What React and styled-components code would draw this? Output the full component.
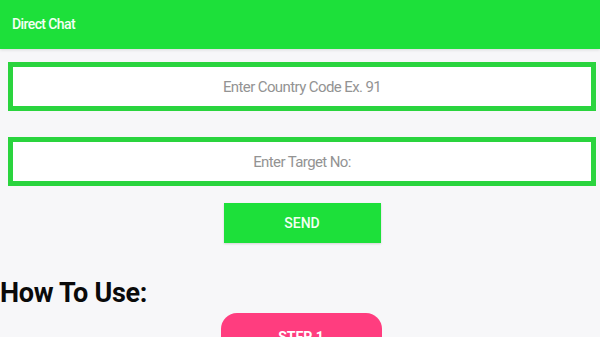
import React from "react";
import styled, { createGlobalStyle } from "styled-components";

const GlobalStyle = createGlobalStyle`
    body {
        margin: 0;
        background: #f7f7f9;
        font-family: Roboto, "Liberation Sans", sans-serif;
        overflow: hidden;
    }
`;

function App() {
    return (
        <>
            <GlobalStyle />
            <Page>
                <Header>
                    <Title>Direct Chat</Title>
                </Header>
                <Form>
                    <Field placeholder="Enter Country Code Ex. 91" />
                    <Field placeholder="Enter Target No:" />
                    <SendButton>SEND</SendButton>
                </Form>
                <Heading>How To Use:</Heading>
                <StepButton>STEP 1</StepButton>
            </Page>
        </>
    );
}

export default App;

const Page = styled.div`
    display: flex;
    flex-direction: column;
    width: 600px;
    height: 337px;
    overflow: hidden;

    & > * {
        flex-shrink: 0;
    }
`;

const Header = styled.header`
    display: flex;
    align-items: center;
    height: 49px;
    padding: 0 12px;
    background: #1de03a;
    box-shadow: 0 1px 3px rgba(0, 0, 0, 0.12);
`;

const Title = styled.h1`
    margin: 0 0 2px;
    color: #f4fff4;
    font-size: 14px;
    font-weight: 500;
    letter-spacing: -0.6px;
`;

const Form = styled.div`
    display: flex;
    flex-direction: column;
    align-items: center;
    gap: 26px;
    padding: 13px 4px 0 8px;
`;

const Field = styled.input`
    box-sizing: border-box;
    width: 100%;
    height: 49px;
    border: 5px solid #2ad43e;
    background: #fff;
    outline: none;
    text-align: center;
    font-family: Roboto, "Liberation Sans", sans-serif;
    font-size: 15px;
    font-weight: 400;
    letter-spacing: -0.6px;

    &::placeholder {
        color: #939393;
    }
`;

const SendButton = styled.button`
    width: 157px;
    height: 40px;
    margin-top: -9px;
    border: none;
    background: #1de03a;
    color: #f2fff2;
    font-family: Roboto, "Liberation Sans", sans-serif;
    font-size: 14px;
    font-weight: 500;
    box-shadow: 0 1px 2px rgba(0, 0, 0, 0.15);
`;

const Heading = styled.h2`
    margin: 35px 0 0;
    font-size: 27px;
    line-height: 30px;
    font-weight: 700;
    color: #0a0a0a;
    letter-spacing: -0.3px;
`;

const StepButton = styled.button`
    align-self: center;
    width: 161px;
    height: 48px;
    margin-top: 5px;
    margin-left: 2px;
    border: none;
    border-radius: 16px;
    background: #ff3d7f;
    color: #fff;
    font-family: Roboto, "Liberation Sans", sans-serif;
    font-size: 14px;
    font-weight: 700;
`;
